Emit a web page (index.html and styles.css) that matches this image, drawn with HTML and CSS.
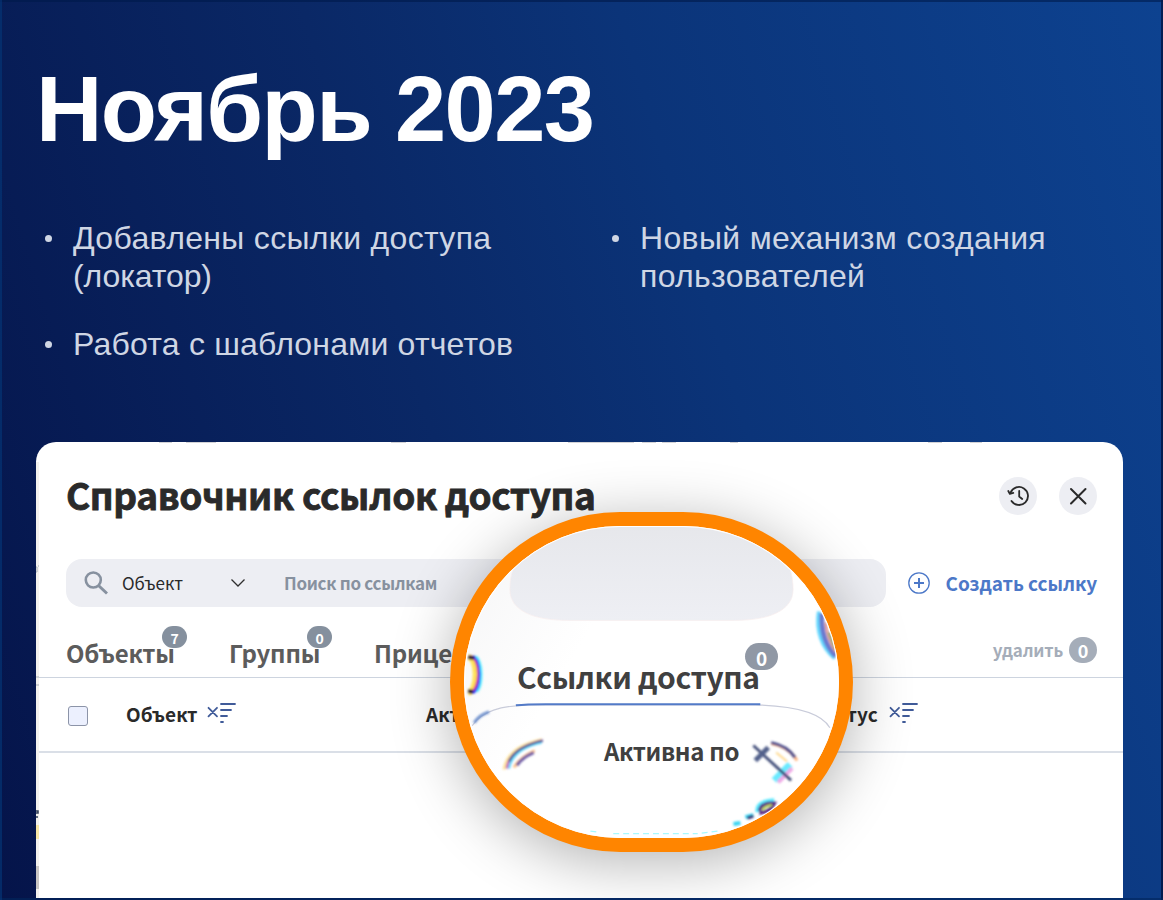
FILE: index.html
```html
<!DOCTYPE html>
<html lang="ru">
<head>
  <meta charset="UTF-8">
  <meta name="viewport" content="width=device-width, initial-scale=1.0">
  <title>Ноябрь 2023</title>
  <link rel="stylesheet" href="styles.css">
</head>
<body>
  <div class="slide">
    <h1>Ноябрь 2023</h1>
    <div class="features">
      <ul>
        <li>Добавлены ссылки доступа<br><span class="tight">(локатор)</span></li>
        <li class="reports">Работа с шаблонами отчетов</li>
      </ul>
      <ul>
        <li>Новый механизм создания<br>пользователей</li>
      </ul>
    </div>

    <div class="dialog">
      <svg class="edge" width="1087" height="456" viewBox="0 0 1087 456">
        <path d="M1.5 20V456" stroke="#f3f2ee" stroke-width="3"/>
        <path d="M123 .5h13M150 .5h30M355 .5h15M532 .5h66M606 .5h14M626 .5h14M694 .5h8M892 .5h14M934 .5h12" stroke="#d3d3d6"/>
        <path d="M0 125h1v5h-1M2 124h1M0 235h3M0 243h3" stroke="#aab0b8" fill="none"/>
        <path d="M0 369h2v2h-2m0 4h2" stroke="#33405a" stroke-width="1.5" fill="none"/>
        <path d="M1.5 383v14" stroke="#f8e7a6" stroke-width="3"/>
        <path d="M1.5 424v23" stroke="#c9c6c4" stroke-width="3"/>
      </svg>
      <div class="dialog-header">
        <h2>Справочник ссылок доступа</h2>
        <button class="round">
          <svg width="38" height="38" viewBox="0 0 38 38" fill="none" stroke="#2a2a2a" stroke-width="1.8" stroke-linecap="round" stroke-linejoin="round">
            <path d="M11.6 15.7a9 9 0 1 1 .9 8.3"/>
            <path d="M9.3 14l1.5 2.900 3.500-1M20.200 14v5.500l3 2.500"/>
          </svg>
        </button>
        <button class="round">
          <svg width="38" height="38" viewBox="0 0 38 38" fill="none" stroke="#2a2a2a" stroke-width="2" stroke-linecap="round">
            <path d="M12 12l14.500 14.500M26.500 12L12 26.500"/>
          </svg>
        </button>
      </div>

      <div class="toolbar">
        <div class="search">
          <svg width="24" height="24" viewBox="0 0 24 24" fill="none" stroke="#87919f" stroke-width="2.6">
            <circle cx="9.3" cy="9" r="7.5"/>
            <path d="M14.500 14.500L23 22.500" stroke-width="3"/>
          </svg>
          <span class="type">Объект</span>
          <svg class="chevron" width="16" height="10" viewBox="0 0 16 10" fill="none" stroke="#2f2f2f" stroke-width="1.3"><path d="M1.500 1.500L8 8l6.500-6.500"/></svg>
          <span class="placeholder">Поиск по ссылкам</span>
        </div>
        <div class="create">
          <svg width="22" height="22" viewBox="0 0 22 22" fill="none" stroke="#4c78c8">
            <circle cx="11" cy="11" r="10.2" stroke-width="1.3"/>
            <path d="M11 6v10M6 11h10" stroke-width="2"/>
          </svg>
          <span>Создать ссылку</span>
        </div>
      </div>

      <div class="tabs">
        <div class="tab tab-objects">Объекты<span class="count">7</span></div>
        <div class="tab tab-groups">Группы<span class="count">0</span></div>
        <div class="tab tab-trailers">Прицепы</div>
        <div class="delete"><span>удалить</span><span class="count-big">0</span></div>
      </div>

      <div class="thead">
        <span class="checkbox"></span>
        <span class="col-object">Объект</span>
        <svg class="sort" width="29" height="22" viewBox="0 0 29 22" fill="none" stroke="#405b99" stroke-width="1.8" stroke-linecap="round"><path d="M1.500 5.800l8.500 8.500M10 5.800l-8.500 8.500M14 2h14M14 8h10M14 14h6M14 20h2"/></svg>
        <span class="col-active">Активна с</span>
        <span class="col-status">Статус</span>
        <svg class="sort" width="29" height="22" viewBox="0 0 29 22" fill="none" stroke="#405b99" stroke-width="1.8" stroke-linecap="round"><path d="M1.500 5.800l8.500 8.500M10 5.800l-8.500 8.500M14 2h14M14 8h10M14 14h6M14 20h2"/></svg>
      </div>

      <!-- magnifier over the "Ссылки доступа" tab -->
      <div class="lens">
        <svg width="375" height="312" viewBox="464 526 375 312" fill="none">
          <defs>
            <linearGradient id="field" x1="0" y1="0" x2="0" y2="1">
              <stop offset="0" stop-color="#e6e7eb"/>
              <stop offset="1" stop-color="#eeeff4"/>
            </linearGradient>
            <linearGradient id="shade" x1="0" y1="0" x2="1" y2=".5">
              <stop offset="0" stop-color="#f5f5f6"/>
              <stop offset=".4" stop-color="#fff"/>
            </linearGradient>
            <filter id="soft" filterUnits="userSpaceOnUse" x="464" y="526" width="376" height="312"><feGaussianBlur stdDeviation=".9"/></filter>
          </defs>
          <rect x="464" y="526" width="376" height="312" fill="url(#shade)"/>
          <path d="M509 589C509 545 545 520 652 520S794 545 794 589C794 611 768 620 735 620H568C534 620 509 611 509 589Z" fill="url(#field)" stroke="#f8edee" stroke-width=".7"/>
          <g filter="url(#soft)">
            <path d="M467 657c10 0 10 34 0 36" stroke="#ffe45a" stroke-width="6"/>
            <path d="M469 656c11 4 10 32 0 37" stroke="#d31c91" stroke-width="2"/>
            <path d="M472 656c9 5 9 31 0 37" stroke="#283aff" stroke-width="2.5"/>
            <path d="M475 656c7 6 7 29 1 36" stroke="#54efff" stroke-width="2"/>
            <path d="M467 657l6 1M467 691l5 1" stroke="#281338" stroke-width="4"/>
            <path d="M820 611c-3 19 3 36 16 47" stroke="#62d7ff" stroke-width="4"/>
            <path d="M823 613c-1 18 4 33 14 43" stroke="#6b79cf" stroke-width="5"/>
            <path d="M827 622c1 13 5 22 10 29" stroke="#e5a09a" stroke-width="3"/>
            <path d="M830 632l7 17" stroke="#9cab7b" stroke-width="3"/>
          </g>
          <path d="M471 726C481 711 499 706 530 705H756C793 706 822 712 831 728" stroke="#c9ccda" stroke-width="1.2"/>
          <path d="M473 723q5-8 15-11" stroke="#7092ce" stroke-width="3" filter="url(#soft)"/>
          <path d="M515 705.500Q525 704.300 545 704.300H761" stroke="#537bc8" stroke-width="2"/>
          <g filter="url(#soft)">
            <path d="M503 770q4-23 38-30" stroke="#ffe49b" stroke-width="3"/>
            <path d="M506 769q3-20 36-28" stroke="#c35aba" stroke-width="3"/>
            <path d="M508 769q4-20 33-26" stroke="#6ddcff" stroke-width="2.5"/>
            <path d="M508 762q7-15 34-21" stroke="#4b5591" stroke-width="2.5"/>
            <path d="M513 768q6-10 21-17" stroke="#ffc58d" stroke-width="3"/>
            <path d="M516 766q5-8 17-13" stroke="#6a58a4" stroke-width="3"/>
            <path d="M772 744q18 3 26 17" stroke="#ffb47c" stroke-width="3"/>
            <path d="M772 743q16 3 24 15" stroke="#444a8b" stroke-width="3"/>
            <path d="M777 753l11 9" stroke="#ffd88b" stroke-width="2"/>
            <path d="M791 765l-16 16" stroke="#69eaff" stroke-width="7"/>
            <path d="M793 769l-14 14" stroke="#eea7e5" stroke-width="4"/>
            <path d="M754 746l38 35" stroke="#3e4a76" stroke-width="2.8"/>
            <path d="M769 748l-13 13" stroke="#52618b" stroke-width="5"/>
            <path d="M758 813q-1-11 17-12" stroke="#59eaff" stroke-width="4"/>
            <path d="M760 812q2-9 15-8l-2 4q-5 5-13 6" stroke="#562281" stroke-width="3.5"/>
            <path d="M763 811q3-5 10-5" stroke="#b8ce54" stroke-width="2.5"/>
            <path d="M746 818l8-2M734 825l7-1" stroke="#37d4f3" stroke-width="4"/>
            <path d="M748 819l6-2" stroke="#33236b" stroke-width="3"/>
          </g>
          <path d="M590 832l8 1M613 834.500h85M702 834l17-2" stroke="#a7faff" stroke-width="1.3" stroke-dasharray="6 4"/>
        </svg>
        <span class="lens-tab">Ссылки доступа</span>
        <span class="lens-count">0</span>
        <span class="lens-col">Активна по</span>
      </div>
    </div>
  </div>
</body>
</html>
```
FILE: styles.css
```css
* {
  box-sizing: border-box;
}
body {
  margin: 0;
  font-family: "Liberation Sans", Arial, sans-serif;
}
.slide {
  width: 1163px;
  height: 900px;
  border: 2px solid rgba(0, 32, 84, 0.6);
  padding: 57px 38px 0 34px;
  overflow: hidden;
  background: linear-gradient(73deg, #05144a 0%, #0a2866 40%, #0b3479 62%, #0d4290 100%);
}
h1 {
  margin: 0;
  height: 100px;
  line-height: 100px;
  font-size: 92px;
  font-weight: bold;
  letter-spacing: -1.6px;
  color: #fff;
  white-space: nowrap;
}
.features {
  display: grid;
  grid-template-columns: 567px 1fr;
  height: 283px;
  padding-top: 60px;
}
.features ul {
  margin: 0;
  padding: 0 0 0 37px;
  list-style: none;
  color: #cfd6e4;
  font-size: 32px;
  line-height: 38px;
  letter-spacing: 0.33px;
  white-space: nowrap;
}
.features li {
  margin-bottom: 30px;
}
.features .tight {
  letter-spacing: -0.1px;
}
.features .reports {
  letter-spacing: 0.2px;
}
.features li::before {
  content: "";
  float: left;
  width: 7px;
  height: 7px;
  margin: 16px 0 0 -28px;
  border-radius: 50%;
  background: #cfd6e4;
}

.dialog {
  position: relative;
  width: 1087px;
  height: 456px;
  border-radius: 20px 20px 0 0;
  background: #fff;
  font-family: "Noto Sans CJK SC", "Noto Sans", sans-serif;
  white-space: nowrap;
  color: #2a2a2a;
}
.edge {
  position: absolute;
  left: 0;
  top: 0;
}
.dialog-header {
  display: flex;
  align-items: center;
  gap: 22px;
  height: 117px;
  padding: 0 26px 9px 30px;
}
h2 {
  flex: 1;
  margin: 0;
  padding-bottom: 4px;
  font-size: 37px;
  line-height: 50px;
  font-weight: bold;
  letter-spacing: -0.4px;
  -webkit-text-stroke: 0.8px #2a2a2a;
}
.round {
  width: 38px;
  height: 38px;
  padding: 0;
  border: none;
  border-radius: 50%;
  background: #edeef3;
}
.round svg,
.search svg,
.create svg,
.sort {
  display: block;
}
.toolbar {
  display: flex;
  align-items: center;
  justify-content: space-between;
  height: 48px;
  padding: 0 26px 0 30px;
}
.search {
  display: flex;
  align-items: center;
  width: 820px;
  height: 48px;
  padding-left: 18px;
  border-radius: 16px;
  background: #edeef3;
  font-size: 17px;
}
.search span,
.create span {
  padding-bottom: 2px;
}
.type {
  width: 108px;
  margin-left: 14px;
}
.chevron {
  margin-right: 38px;
}
.placeholder {
  font-weight: bold;
  letter-spacing: -0.3px;
  color: #87919f;
}
.create {
  display: flex;
  align-items: center;
  gap: 16px;
  color: #4c78c8;
  font-size: 19px;
  font-weight: bold;
  letter-spacing: -0.05px;
}
.tabs {
  display: flex;
  height: 71px;
  margin-left: 3px;
  padding: 23px 26px 0 27px;
  border-bottom: 1px solid #cdd4df;
  font-size: 24px;
  line-height: 46px;
  font-weight: bold;
  letter-spacing: -0.2px;
  color: #5c5c5c;
}
.tab {
  position: relative;
}
.tab-objects {
  width: 163px;
}
.tab-groups {
  width: 145px;
}
.count {
  position: absolute;
  left: 96px;
  top: -4px;
  width: 25px;
  height: 22px;
  border-radius: 11px;
  background: #85909e;
  color: #fff;
  font-size: 14px;
  line-height: 24px;
  text-align: center;
}
.tab-groups .count {
  left: 78px;
}
.delete {
  display: flex;
  align-items: center;
  gap: 6px;
  height: 26px;
  margin: 7px 0 0 auto;
  font-size: 17px;
  color: #a5adb9;
}
.count-big {
  width: 28px;
  height: 26px;
  border-radius: 13px;
  background: #a5adb9;
  color: #fff;
  font-size: 18px;
  line-height: 26px;
  text-align: center;
}
.thead {
  display: flex;
  align-items: center;
  height: 75px;
  margin-left: 3px;
  padding: 0 0 3px 29px;
  border-bottom: 2px solid #dadfe7;
  font-size: 19px;
  font-weight: bold;
}
.checkbox {
  width: 20px;
  height: 20px;
  margin: 6px 38px 0 0;
  border: 1.5px solid #8c94a8;
  border-radius: 3px;
  background: #ecf0fe;
}
.col-object {
  width: 81px;
}
.col-active {
  width: 388px;
  margin-left: 190px;
}
.col-status {
  width: 75px;
}

.lens {
  position: absolute;
  left: 414px;
  top: 70px;
  width: 403px;
  height: 340px;
  border: 14px solid #ff8500;
  border-radius: 170px;
  background: #fff;
  box-shadow: 0 10px 60px rgba(0, 0, 0, 0.3);
  font-weight: bold;
  color: #404040;
}
.lens svg {
  display: block;
  border: 1px solid #fff;
  border-radius: 156px;
}
.lens-tab,
.lens-count,
.lens-col {
  position: absolute;
}
.lens-tab {
  left: 53px;
  top: 128px;
  font-size: 30px;
  line-height: 44px;
  letter-spacing: -0.4px;
}
.lens-count {
  left: 281px;
  top: 117px;
  width: 33px;
  height: 27px;
  border-radius: 14px;
  background: #9098a5;
  color: #fff;
  font-size: 19px;
  line-height: 29px;
  text-align: center;
}
.lens-col {
  left: 140px;
  top: 207px;
  font-size: 24px;
  line-height: 36px;
  letter-spacing: -0.3px;
}
```
